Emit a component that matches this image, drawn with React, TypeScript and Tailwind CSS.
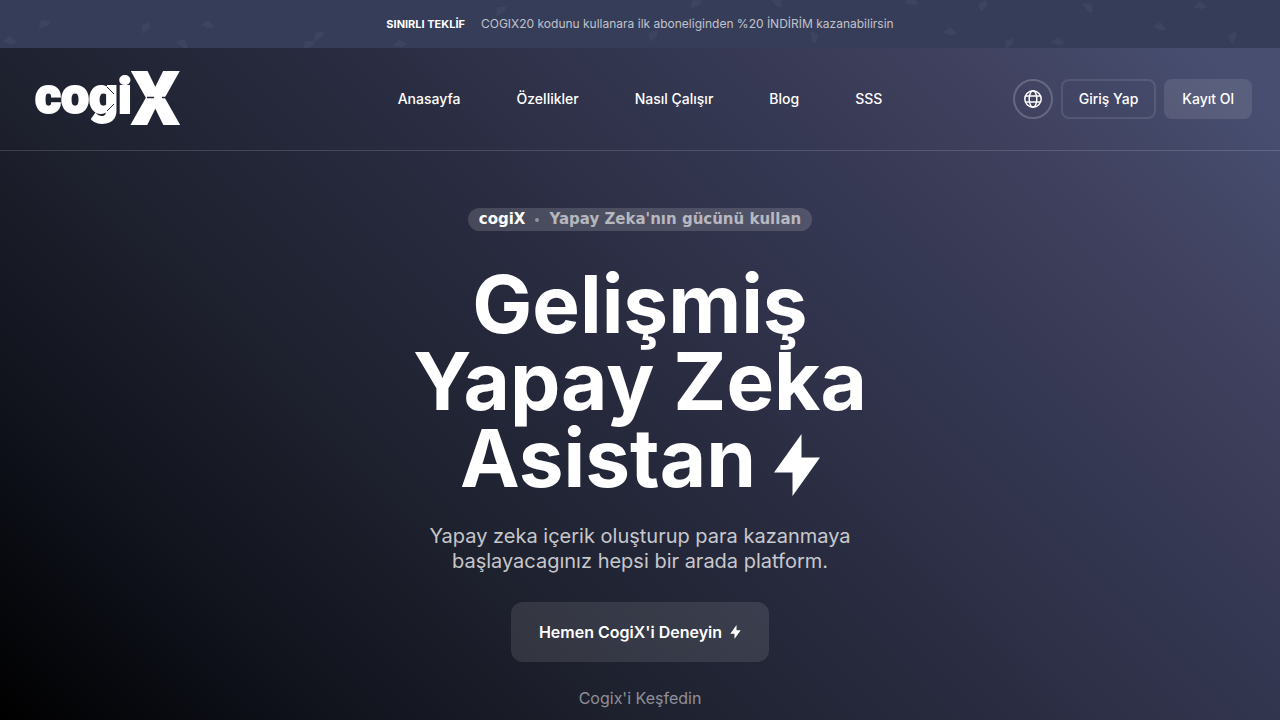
const navLinks = ["Anasayfa", "Özellikler", "Nasıl Çalışır", "Blog", "SSS"];

// x, y, rotation of each confetti piece in the banner
const confetti = [
  [10, 40, 10], [44, 23, -20], [145, 27, -50], [183, 43, 35], [208, 24, 15],
  [308, 44, -30], [318, 35, -40], [400, 43, 0], [500, 10, -40], [652, 35, -50],
  [695, 3, -30], [778, 2, 40], [815, 37, 80], [912, 1, 10], [950, 31, 10],
  [982, 5, -60], [1008, 43, -50], [1058, 41, 15], [1089, 7, 50], [1160, 26, 20],
  [1200, 5, 0], [1232, 37, -70],
];

function Bolt({ className }: { className: string }) {
  return (
    <svg viewBox="0 0 46 62" className={className} fill="currentColor" aria-hidden="true">
      <path d="M27.500 0L0 38.500H18.500V62L46 23.500H27.500Z" />
    </svg>
  );
}

function Globe() {
  return (
    <svg viewBox="0 0 18 18" className="size-[18px]" fill="none" stroke="currentColor" strokeWidth="1.5" aria-hidden="true">
      <circle cx="9" cy="9" r="8.200" />
      <ellipse cx="9" cy="9" rx="3.800" ry="8.200" />
      <path d="M1.500 6H16.500M1.500 12H16.500" />
    </svg>
  );
}

function Logo() {
  return (
    <svg viewBox="0 0 156 102" className="h-[102px] w-[156px]" role="img" aria-label="cogiX">
      <g fill="#fff" stroke="#fff" fontFamily="Roboto, sans-serif" fontWeight="900">
        <text x="3" y="65" fontSize="50" strokeWidth="2">cogi</text>
        <text x="100" y="76" fontSize="73" strokeWidth="2">X</text>
      </g>
      <path d="M115 49.500H122M130 49.500H137" stroke="#232636" strokeWidth="1.500" />
      <path d="M75 39L82 46M82 56L75 63" stroke="#232636" strokeWidth="1" />
    </svg>
  );
}

function Banner() {
  return (
    <div className="relative flex h-12 items-center justify-center overflow-hidden bg-[#363d59]">
      <svg viewBox="0 0 1280 48" preserveAspectRatio="xMidYMid slice" className="absolute inset-0 h-full w-full" aria-hidden="true">
        {confetti.map(([x, y, angle]) => (
          <path
            key={`${x}-${y}`}
            d={`M${x - 7} ${y + 3}L${x - 1} ${y - 4}L${x + 7} ${y + 1}L${x + 3} ${y + 4}Z`}
            fill="#fff"
            opacity="0.04"
            transform={`rotate(${angle} ${x} ${y})`}
          />
        ))}
      </svg>
      <p className="relative flex items-center gap-4 text-xs text-white/70">
        <strong className="text-[11px] font-bold text-white">SINIRLI TEKLİF</strong>
        <span>COGIX20 kodunu kullanara ilk aboneliginden %20 İNDİRİM kazanabilirsin</span>
      </p>
    </div>
  );
}

function Header() {
  return (
    <header className="grid grid-cols-[1fr_auto_1fr] items-center border-b border-white/15 px-7 text-sm font-medium text-white">
      <a href="#" className="ml-1 w-fit">
        <Logo />
      </a>
      <nav className="flex gap-14">
        {navLinks.map((label) => (
          <a key={label} href="#">{label}</a>
        ))}
      </nav>
      <div className="flex items-center justify-end gap-2">
        <button type="button" aria-label="Dil" className="flex size-10 items-center justify-center rounded-full border-2 border-white/20">
          <Globe />
        </button>
        <a href="#" className="flex h-10 items-center rounded-lg border-2 border-white/10 px-4">Giriş Yap</a>
        <a href="#" className="flex h-10 items-center rounded-lg bg-white/10 px-[18px]">Kayıt Ol</a>
      </div>
    </header>
  );
}

function Hero() {
  return (
    <main className="flex flex-col items-center pt-[57px] pb-2 text-center text-white">
      <div className="flex h-[23px] items-center gap-2.5 rounded-full bg-white/15 px-[11px] font-['DejaVu_Sans',sans-serif] text-[15px] font-bold">
        <span>cogiX</span>
        <span className="size-1 rounded-full bg-white/40" />
        <span className="text-white/60">Yapay Zeka'nın gücünü kullan</span>
      </div>
      <h1 className="mt-[34px] text-[80px] leading-[77px] font-bold">
        Gelişmiş
        <br />
        Yapay Zeka
        <br />
        <span className="inline-flex items-center gap-[18px]">
          Asistan
          <Bolt className="mt-3.5 h-[62px] w-[46px]" />
        </span>
      </h1>
      <p className="mt-7 text-xl leading-[25px] text-white/75">
        Yapay zeka içerik oluşturup para kazanmaya
        <br />
        başlayacagınız hepsi bir arada platform.
      </p>
      <a href="#" className="mt-7 flex h-[60px] items-center gap-2 rounded-xl bg-white/10 px-7 font-semibold">
        Hemen CogiX'i Deneyin
        <Bolt className="h-[14px] w-[11px]" />
      </a>
      <a href="#" className="mt-6 text-white/50">Cogix'i Keşfedin</a>
    </main>
  );
}

export default function App() {
  return (
    <div className="flex min-h-screen flex-col font-['Inter',sans-serif]">
      <Banner />
      <div className="flex-1 bg-[linear-gradient(45deg,#000_0%,#0e1019_14%,#1c1f2b_30%,#25283a_45%,#343751_68%,#3f405d_82%,#474e70_96%)]">
        <Header />
        <Hero />
      </div>
    </div>
  );
}
